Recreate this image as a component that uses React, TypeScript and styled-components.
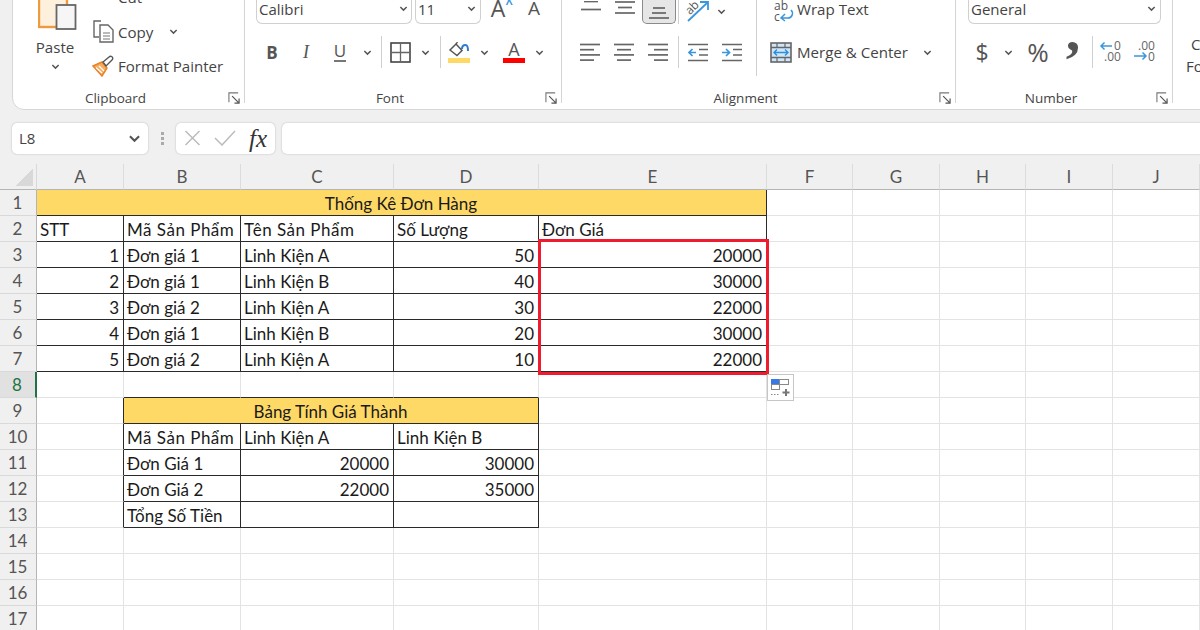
import React from "react";
import styled, { createGlobalStyle, css } from "styled-components";

const GlobalStyle = createGlobalStyle`
    html, body {
        margin: 0;
        padding: 0;
        background: #f0f0f0;
    }
    * {
        box-sizing: border-box;
    }
`;

const COLS = [87, 117, 153, 145, 228, 86, 87, 86, 87, 87];
const COL_NAMES = ["A", "B", "C", "D", "E", "F", "G", "H", "I", "J"];
const ROW_COUNT = 17;

// nội dung bảng, key = tên ô
const DATA: Record<string, string | number> = {
    A1: "Thống Kê Đơn Hàng",
    A2: "STT",
    B2: "Mã Sản Phẩm",
    C2: "Tên Sản Phẩm",
    D2: "Số Lượng",
    E2: "Đơn Giá",
    A3: 1,
    B3: "Đơn giá 1",
    C3: "Linh Kiện A",
    D3: 50,
    E3: 20000,
    A4: 2,
    B4: "Đơn giá 1",
    C4: "Linh Kiện B",
    D4: 40,
    E4: 30000,
    A5: 3,
    B5: "Đơn giá 2",
    C5: "Linh Kiện A",
    D5: 30,
    E5: 22000,
    A6: 4,
    B6: "Đơn giá 1",
    C6: "Linh Kiện B",
    D6: 20,
    E6: 30000,
    A7: 5,
    B7: "Đơn giá 2",
    C7: "Linh Kiện A",
    D7: 10,
    E7: 22000,
    B9: "Bảng Tính Giá Thành",
    B10: "Mã Sản Phẩm",
    C10: "Linh Kiện A",
    D10: "Linh Kiện B",
    B11: "Đơn Giá 1",
    C11: 20000,
    D11: 30000,
    B12: "Đơn Giá 2",
    C12: 22000,
    D12: 35000,
    B13: "Tổng Số Tiền",
};

const Chevron = ({ size = 9 }: { size?: number }) => (
    <svg width={size} height={size} viewBox="0 0 10 10" fill="none">
        <path d="M1.5 3.2 5 6.8l3.5-3.6" stroke="#555" strokeWidth="1.6" />
    </svg>
);

const Launcher = () => (
    <svg width="12" height="12" viewBox="0 0 13 13" fill="none">
        <path d="M11 1H1v10" stroke="#777" strokeWidth="1.2" />
        <path d="M4.5 4.5 12 12M12 7v5H7" stroke="#555" strokeWidth="1.3" />
    </svg>
);

const PasteIcon = () => (
    <svg width="40" height="44" viewBox="0 0 40 44" fill="none">
        <rect x="1" y="1" width="28" height="38" fill="#fdf0dc" stroke="#ee9a3e" strokeWidth="2.4" />
        <rect x="18.5" y="17" width="19" height="24" fill="#f6f6f6" stroke="#666" strokeWidth="1.8" />
    </svg>
);

const CutIcon = () => (
    <svg width="16" height="16" viewBox="0 0 16 16" fill="none">
        <circle cx="3.5" cy="8" r="2.3" stroke="#3a96dd" strokeWidth="1.6" />
        <circle cx="12.5" cy="8" r="2.3" stroke="#3a96dd" strokeWidth="1.6" />
        <path d="M4.5 5.5 8 -3M11.5 5.5 8 -3" stroke="#555" strokeWidth="1.2" />
    </svg>
);

const CopyIcon = () => (
    <svg width="23" height="23" viewBox="0 0 23 23" fill="none">
        <path d="M9 1H2v16h5" stroke="#666" strokeWidth="1.4" />
        <path d="M8 5h8l5 5v12H8z" fill="#fff" stroke="#666" strokeWidth="1.4" />
        <path d="M11 13h7M11 16h7M11 19h7" stroke="#777" strokeWidth="1.1" />
    </svg>
);

const PainterIcon = () => (
    <svg width="23" height="22" viewBox="0 0 23 22" fill="none">
        <path d="M1 11 10 7l5 6-5 8z" fill="#f5ad5f" stroke="#e8822a" strokeWidth="1.5" />
        <path d="M4 12.5 10 18M7 11l5 5" stroke="#fff" strokeWidth="1.2" />
        <path d="m11 7 3 4 6-6c1-1 1-2.500 0-3.200S18 1 17 2z" fill="#fff" stroke="#555" strokeWidth="1.4" />
    </svg>
);

const BordersIcon = () => (
    <svg width="21" height="21" viewBox="0 0 21 21" fill="none">
        <rect x="1" y="1" width="19" height="19" stroke="#444" strokeWidth="1.6" />
        <path d="M10.500 1v19M1 10.500h19" stroke="#666" strokeWidth="1.300" />
    </svg>
);

const FillIcon = () => (
    <svg width="23" height="21" viewBox="0 0 23 21" fill="none">
        <path d="M2 8 8 2l6 6.500-5 5z" stroke="#555" strokeWidth="1.500" />
        <path d="M8 2 9.500 0" stroke="#555" strokeWidth="1.300" />
        <path d="M14 7c0-3 2-4 3.500-4s2.500 2 2.500 6" stroke="#2b7cd3" strokeWidth="2" />
        <rect y="16" width="22" height="5" fill="#ffd966" />
    </svg>
);

const AlignIcon = ({ lines }: { lines: [number, number][] }) => (
    <svg width="20" height="19" viewBox="0 0 20 19" fill="none">
        {lines.map(([x1, x2], i) => (
            <path key={i} d={`M${x1} ${1.5 + i * 5.2}H${x2}`} stroke="#666" strokeWidth="1.700" />
        ))}
    </svg>
);

const TopAlignIcon = ({ lines }: { lines: [number, number, number][] }) => (
    <svg width="20" height="20" viewBox="0 0 20 20" fill="none">
        {lines.map(([x1, x2, y], i) => (
            <path key={i} d={`M${x1} ${y}H${x2}`} stroke="#666" strokeWidth="1.700" />
        ))}
    </svg>
);

const OrientationIcon = () => (
    <svg width="26" height="24" viewBox="0 0 26 24" fill="none">
        <text x="2" y="13" transform="rotate(-45 8 10)" fontFamily="Open Sans" fontSize="12" fill="#555">
            ab
        </text>
        <path d="M4 22 23 4M16 3h8v8" stroke="#3a96dd" strokeWidth="1.800" />
    </svg>
);

const WrapIcon = () => (
    <svg width="22" height="22" viewBox="0 0 22 22" fill="none">
        <text x="1" y="10" fontFamily="Open Sans" fontSize="12" fill="#555">
            ab
        </text>
        <text x="1" y="21" fontFamily="Open Sans" fontSize="12" fill="#555">
            c
        </text>
        <path d="M18 10c3 3 1 8-3 8H9M12 14l-4 4 4 3" stroke="#3a96dd" strokeWidth="1.500" />
    </svg>
);

const IndentIcon = ({ dir }: { dir: "left" | "right" }) => (
    <svg width="20" height="19" viewBox="0 0 20 19" fill="none">
        <path d="M0 1.500h20M0 17.500h20" stroke="#666" strokeWidth="1.600" />
        <path d="M11 6.500h9M11 12h9" stroke="#666" strokeWidth="1.600" />
        {dir === "left" ? (
            <path d="M8 9.500H1M4.500 6 1 9.500 4.500 13" stroke="#3a96dd" strokeWidth="1.700" />
        ) : (
            <path d="M0 9.500h7M4 6l3.500 3.500L4 13" stroke="#3a96dd" strokeWidth="1.700" />
        )}
    </svg>
);

const MergeIcon = () => (
    <svg width="22" height="21" viewBox="0 0 22 21" fill="none">
        <rect x="1" y="1" width="20" height="19" fill="#cfe6f8" stroke="#666" strokeWidth="1.600" />
        <path d="M1 5.500h20M1 15.500h20" stroke="#666" strokeWidth="1.300" />
        <path d="M7 1v4M15 1v4M7 16v4M15 16v4" stroke="#666" strokeWidth="1.200" />
        <path d="M4 10.500h14M7 7.500l-3 3 3 3M15 7.500l3 3-3 3" stroke="#2b8fdc" strokeWidth="1.400" />
    </svg>
);

const DecimalIcon = ({ more }: { more: boolean }) => (
    <svg width="24" height="24" viewBox="0 0 24 24" fill="none">
        <text x={more ? 15 : 5} y="10" fontFamily="Open Sans" fontSize="12" fill="#666">
            {more ? "0" : ".00"}
        </text>
        <text x={more ? 5 : 15} y="21" fontFamily="Open Sans" fontSize="12" fill="#666">
            {more ? ".00" : "0"}
        </text>
        {more ? (
            <path d="M13 6H2M5.500 2.500 2 6l3.500 3.500" stroke="#3a96dd" strokeWidth="1.500" />
        ) : (
            <path d="M1 16h12M9.500 12.500 13 16l-3.500 3.500" stroke="#3a96dd" strokeWidth="1.500" />
        )}
    </svg>
);

const PasteOptionsIcon = () => (
    <svg width="20" height="18" viewBox="0 0 20 18" fill="none">
        <rect x="0.500" y="0.500" width="8" height="5" fill="#3b78e7" stroke="#3b78e7" />
        <rect x="8.500" y="0.500" width="9" height="5" fill="#fff" stroke="#888" />
        <rect x="0.500" y="5.500" width="8" height="5" fill="#fff" stroke="#888" />
        <path d="M0 15.500h9" stroke="#888" strokeDasharray="1.500 1.500" />
        <path d="M15 10v7M11.500 13.500h7" stroke="#777" strokeWidth="2" />
    </svg>
);

export default function App() {
    const cells: React.ReactNode[] = [];

    for (let r = 1; r <= ROW_COUNT; r++) {
        cells.push(
            <RowHead key={`head-${r}`} $active={r === 8}>
                {r}
            </RowHead>
        );
        for (let c = 0; c < COL_NAMES.length + 1; c++) {
            // ô gộp
            if (r === 1 && c > 0 && c < 5) continue;
            if (r === 9 && c > 1 && c < 4) continue;

            const name = `${COL_NAMES[c]}${r}`;
            const value = DATA[name];
            const merged = (r === 1 && c === 0) || (r === 9 && c === 1);
            const upper = r <= 7 && c <= 4;
            const lower = r >= 9 && r <= 13 && c >= 1 && c <= 3;
            const wide = typeof value === "string" && value.includes("Phẩm");

            cells.push(
                <Cell
                    key={name}
                    $span={merged ? (r === 1 ? 5 : 3) : 1}
                    $merged={merged}
                    $number={typeof value === "number"}
                    $wide={wide}
                    $darkRight={upper || lower || (r >= 9 && r <= 13 && c === 0)}
                    $darkBottom={upper || lower || (r === 8 && c >= 1 && c <= 3)}
                >
                    {value}
                </Cell>
            );
        }
    }

    return (
        <Page>
            <GlobalStyle />
            <Ribbon>
                <Group $width={232}>
                    <GroupBody>
                        <ClipboardWrap>
                            <PasteCol>
                                <PasteIconWrap>
                                    <PasteIcon />
                                </PasteIconWrap>
                                <RibbonText>Paste</RibbonText>
                                <Chevron />
                            </PasteCol>
                            <ClipList>
                                <ClipItem>
                                    <ClipIcon>
                                        <CutIcon />
                                    </ClipIcon>
                                    <RibbonText>Cut</RibbonText>
                                </ClipItem>
                                <ClipItem>
                                    <ClipIcon>
                                        <CopyIcon />
                                    </ClipIcon>
                                    <RibbonText>Copy</RibbonText>
                                    <ChevronGap $left={16}>
                                        <Chevron />
                                    </ChevronGap>
                                </ClipItem>
                                <ClipItem>
                                    <ClipIcon>
                                        <PainterIcon />
                                    </ClipIcon>
                                    <RibbonText>Format Painter</RibbonText>
                                </ClipItem>
                            </ClipList>
                        </ClipboardWrap>
                    </GroupBody>
                    <GroupFooter>
                        <span />
                        <GroupLabel>Clipboard</GroupLabel>
                        <LauncherSlot>
                            <Launcher />
                        </LauncherSlot>
                    </GroupFooter>
                </Group>

                <Group $width={317}>
                    <GroupBody>
                        <ToolRow $left={11}>
                            <Select $width={156} $padRight={3}>
                                <SelectText>Calibri</SelectText>
                                <Chevron />
                            </Select>
                            <Select $width={66} $gap={3} $padRight={4}>
                                <SelectText>11</SelectText>
                                <Chevron />
                            </Select>
                            <Tool $width={36} $left={-1}>
                                <RaisedGlyph $size={23}>A</RaisedGlyph>
                                <SuperMark $color="#3a96dd">^</SuperMark>
                            </Tool>
                            <Tool $width={36}>
                                <RaisedGlyph $size={19}>A</RaisedGlyph>
                                <SuperMark $color="#3a96dd">ˇ</SuperMark>
                            </Tool>
                        </ToolRow>
                        <ToolRow $left={10} $top>
                            <Tool $width={34}>
                                <Glyph $size={17} $weight={700}>
                                    B
                                </Glyph>
                            </Tool>
                            <Tool $width={34}>
                                <Glyph $size={18} $italic>
                                    I
                                </Glyph>
                            </Tool>
                            <Tool $width={34}>
                                <Underlined>U</Underlined>
                            </Tool>
                            <Tool $width={20}>
                                <Chevron />
                            </Tool>
                            <Divider />
                            <Tool $width={28}>
                                <BordersIcon />
                            </Tool>
                            <Tool $width={14} $left={4}>
                                <Chevron />
                            </Tool>
                            <Divider $left={8} />
                            <Tool $width={28}>
                                <FillIcon />
                            </Tool>
                            <Tool $width={14} $left={4}>
                                <Chevron />
                            </Tool>
                            <Tool $width={46}>
                                <ColorA>A</ColorA>
                            </Tool>
                            <Tool $width={14} $left={-5}>
                                <Chevron />
                            </Tool>
                        </ToolRow>
                    </GroupBody>
                    <GroupFooter>
                        <span />
                        <GroupLabel>Font</GroupLabel>
                        <LauncherSlot>
                            <Launcher />
                        </LauncherSlot>
                    </GroupFooter>
                </Group>

                <Group $width={394}>
                    <GroupBody>
                        <ToolRow $left={12}>
                            <Tool $width={34}>
                                <TopAlignIcon lines={[[3, 17, 0.5], [0, 20, 8.5]]} />
                            </Tool>
                            <Tool $width={34}>
                                <TopAlignIcon lines={[[0, 20, 1], [3, 17, 6.5], [0, 20, 12]]} />
                            </Tool>
                            <Tool $width={34} $selected>
                                <TopAlignIcon lines={[[4, 16, 7], [3, 17, 12], [0, 20, 17]]} />
                            </Tool>
                            <Divider $h={26} $left={2} />
                            <Tool $width={28}>
                                <OrientationIcon />
                            </Tool>
                            <Tool $width={14} $left={3}>
                                <Chevron />
                            </Tool>
                            <Divider $h={38} $left={28} />
                            <Tool $width={27} $left={9}>
                                <WrapIcon />
                            </Tool>
                            <RaisedText>Wrap Text</RaisedText>
                        </ToolRow>
                        <ToolRow $left={11} $top>
                            <Tool $width={34}>
                                <AlignIcon lines={[[0, 20], [0, 14], [0, 20], [0, 14]]} />
                            </Tool>
                            <Tool $width={34}>
                                <AlignIcon lines={[[0, 20], [3, 17], [0, 20], [3, 17]]} />
                            </Tool>
                            <Tool $width={34}>
                                <AlignIcon lines={[[0, 20], [6, 20], [0, 20], [6, 20]]} />
                            </Tool>
                            <Divider $left={3} />
                            <Tool $width={30}>
                                <IndentIcon dir="left" />
                            </Tool>
                            <Tool $width={38}>
                                <IndentIcon dir="right" />
                            </Tool>
                            <Divider $h={48} $left={5} />
                            <Tool $width={33} $left={3}>
                                <MergeIcon />
                            </Tool>
                            <RibbonText>Merge &amp; Center</RibbonText>
                            <ChevronGap $left={15}>
                                <Chevron />
                            </ChevronGap>
                        </ToolRow>
                    </GroupBody>
                    <GroupFooter>
                        <span />
                        <GroupLabel>Alignment</GroupLabel>
                        <LauncherSlot>
                            <Launcher />
                        </LauncherSlot>
                    </GroupFooter>
                </Group>

                <Group $width={217}>
                    <GroupBody>
                        <ToolRow $left={12}>
                            <Select $width={193} $padRight={4}>
                                <SelectText>General</SelectText>
                                <Chevron />
                            </Select>
                        </ToolRow>
                        <ToolRow $left={10} $top>
                            <Tool $width={32}>
                                <Glyph $size={23}>$</Glyph>
                            </Tool>
                            <Tool $width={20}>
                                <Chevron />
                            </Tool>
                            <Tool $width={40}>
                                <Glyph $size={26}>%</Glyph>
                            </Tool>
                            <Tool $width={30}>
                                <CommaGlyph>,</CommaGlyph>
                            </Tool>
                            <Divider />
                            <Tool $width={28}>
                                <DecimalIcon more />
                            </Tool>
                            <Tool $width={40}>
                                <DecimalIcon more={false} />
                            </Tool>
                        </ToolRow>
                    </GroupBody>
                    <GroupFooter>
                        <span />
                        <GroupLabel>Number</GroupLabel>
                        <LauncherSlot>
                            <Launcher />
                        </LauncherSlot>
                    </GroupFooter>
                </Group>

                <CutGroup>
                    <CutLine $left={18}>Conditional</CutLine>
                    <CutLine $left={13}>Formatting</CutLine>
                </CutGroup>
            </Ribbon>

            <FormulaBar>
                <NameBox>
                    <NameText>L8</NameText>
                    <Chevron size={13} />
                </NameBox>
                <Dots>
                    <i />
                    <i />
                    <i />
                </Dots>
                <FxBox>
                    <svg width="17" height="16" viewBox="0 0 16 16" fill="none">
                        <path d="M1 1l14 14M15 1 1 15" stroke="#bbb" strokeWidth="1.500" />
                    </svg>
                    <svg width="22" height="16" viewBox="0 0 22 16" fill="none">
                        <path d="M1 8l7 7L21 1" stroke="#bbb" strokeWidth="1.500" />
                    </svg>
                    <FxText>fx</FxText>
                </FxBox>
                <FormulaInput />
            </FormulaBar>

            <Sheet>
                <Corner />
                {COL_NAMES.map((n) => (
                    <ColHead key={n}>{n}</ColHead>
                ))}
                <ColHead />
                {cells}
                <RedBox />
                <PasteOptions>
                    <PasteOptionsIcon />
                </PasteOptions>
            </Sheet>
        </Page>
    );
}

const Page = styled.div`
    width: 1200px;
    height: 630px;
    overflow: hidden;
    background: #f0f0f0;
    display: flex;
    flex-direction: column;
`;

const Ribbon = styled.div`
    flex: none;
    display: flex;
    margin: -22px 0 0 12px;
    width: 1300px;
    height: 132px;
    padding-bottom: 6px;
    background: #fff;
    border: 1px solid #d6d6d6;
    border-radius: 0 0 0 12px;
`;

const Group = styled.div<{ $width: number }>`
    flex: none;
    display: flex;
    flex-direction: column;
    width: ${(p) => p.$width}px;
    border-right: 1px solid #d4d4d4;
`;

const GroupBody = styled.div`
    flex: none;
    height: 102px;
    padding-top: 19px;
`;

const GroupFooter = styled.div`
    display: grid;
    grid-template-columns: 1fr auto 1fr;
    align-items: center;
    height: 22px;
    padding: 8px 4px 0 0;
`;

const GroupLabel = styled.span`
    margin-right: 22px;
    font-family: "Open Sans", sans-serif;
    font-size: 13.5px;
    color: #444;
`;

const LauncherSlot = styled.span`
    justify-self: end;
    display: flex;
`;

const ClipboardWrap = styled.div`
    display: flex;
    padding-left: 12px;
`;

const PasteCol = styled.div`
    width: 60px;
    display: flex;
    flex-direction: column;
    align-items: center;
    margin-top: -19px;
    gap: 5px;
`;

const PasteIconWrap = styled.div`
    height: 53px;
    display: flex;
    align-items: flex-end;
    padding-left: 5px;
`;

const ClipList = styled.div`
    margin-top: -18px;
    margin-left: 3px;
    display: flex;
    flex-direction: column;
`;

const ClipItem = styled.div`
    height: 34.5px;
    display: flex;
    align-items: center;
`;

const ClipIcon = styled.span`
    width: 30px;
    display: flex;
    justify-content: center;
`;

const RibbonText = styled.span`
    font-family: "Open Sans", sans-serif;
    font-size: 15.1px;
    color: #444;
    white-space: nowrap;
`;

const RaisedText = styled(RibbonText)`
    margin-top: -4px;
`;

const ChevronGap = styled.span<{ $left: number }>`
    display: flex;
    margin-left: ${(p) => p.$left}px;
`;

const ToolRow = styled.div<{ $left: number; $top?: boolean }>`
    display: flex;
    align-items: center;
    height: ${(p) => (p.$top ? 32 : 26)}px;
    padding-left: ${(p) => p.$left}px;
    margin-top: ${(p) => (p.$top ? 12 : 0)}px;
`;

const Select = styled.div<{ $width: number; $gap?: number; $padRight: number }>`
    display: flex;
    align-items: center;
    justify-content: space-between;
    flex: none;
    width: ${(p) => p.$width}px;
    height: 26px;
    margin-left: ${(p) => p.$gap ?? 0}px;
    padding: 0 ${(p) => p.$padRight}px 4px 2px;
    border: 1px solid #d0d0d0;
    border-top: none;
    border-radius: 0 0 6px 6px;
`;

const SelectText = styled.span`
    font-family: "Open Sans", sans-serif;
    font-size: 15px;
    color: #444;
`;

const Tool = styled.div<{ $width: number; $left?: number; $selected?: boolean }>`
    position: relative;
    flex: none;
    display: flex;
    align-items: center;
    justify-content: center;
    width: ${(p) => p.$width}px;
    height: 100%;
    margin-left: ${(p) => p.$left ?? 0}px;
    ${(p) =>
        p.$selected &&
        css`
            background: #e6e6e6;
            border: 1px solid #8a8a8a;
            border-top: none;
            border-radius: 0 0 5px 5px;
        `}
`;

const Glyph = styled.span<{ $size: number; $weight?: number; $italic?: boolean }>`
    font-family: ${(p) => (p.$italic ? '"Liberation Serif", serif' : '"Open Sans", sans-serif')};
    font-size: ${(p) => p.$size}px;
    font-weight: ${(p) => p.$weight ?? 400};
    font-style: ${(p) => (p.$italic ? "italic" : "normal")};
    color: #555;
    line-height: 1;
`;

const RaisedGlyph = styled(Glyph)`
    margin-bottom: 6px;
`;

const SuperMark = styled.span<{ $color: string }>`
    position: absolute;
    top: -4px;
    right: 3px;
    font-family: "Open Sans", sans-serif;
    font-size: 13px;
    font-weight: 700;
    color: ${(p) => p.$color};
`;

const Underlined = styled.span`
    font-family: "Open Sans", sans-serif;
    font-size: 17px;
    color: #555;
    line-height: 1;
    padding-bottom: 1px;
    border-bottom: 2px solid #777;
`;

const ColorA = styled.span`
    font-family: "Open Sans", sans-serif;
    font-size: 18px;
    color: #555;
    line-height: 17px;
    width: 22px;
    text-align: center;
    border-bottom: 5px solid #ff0000;
`;

const CommaGlyph = styled.span`
    font-family: "Liberation Serif", serif;
    font-weight: 700;
    font-size: 58px;
    color: #555;
    line-height: 1;
    transform: translateY(-21px);
`;

const Divider = styled.div<{ $h?: number; $left?: number }>`
    flex: none;
    width: 1px;
    height: ${(p) => p.$h ?? 32}px;
    margin-left: ${(p) => p.$left ?? 4}px;
    margin-right: 4px;
    background: #d0d0d0;
`;

const CutGroup = styled.div`
    display: flex;
    flex-direction: column;
    gap: 2px;
    padding-top: 55px;
`;

const CutLine = styled(RibbonText)<{ $left: number }>`
    margin-left: ${(p) => p.$left}px;
`;

const FormulaBar = styled.div`
    flex: none;
    display: flex;
    align-items: center;
    height: 32px;
    margin-top: 12px;
    padding-left: 12px;
`;

const barBox = css`
    height: 31px;
    background: #fff;
    border-radius: 5px;
    box-shadow: 0 0 2px rgba(0, 0, 0, 0.25);
`;

const NameBox = styled.div`
    ${barBox}
    flex: none;
    display: flex;
    align-items: center;
    justify-content: space-between;
    width: 136px;
    padding: 0 7px;
`;

const NameText = styled.span`
    font-family: "Open Sans", sans-serif;
    font-size: 15px;
    color: #444;
`;

const Dots = styled.div`
    flex: none;
    width: 28px;
    display: flex;
    flex-direction: column;
    align-items: center;
    gap: 2px;
    & i {
        width: 3px;
        height: 3px;
        background: #aaa;
    }
`;

const FxBox = styled.div`
    ${barBox}
    flex: none;
    display: flex;
    align-items: center;
    gap: 13px;
    width: 99px;
    padding-left: 8px;
`;

const FxText = styled.span`
    font-family: "Liberation Serif", serif;
    font-style: italic;
    font-weight: 400;
    font-size: 25px;
    color: #333;
    line-height: 1;
`;

const FormulaInput = styled.div`
    ${barBox}
    flex: none;
    width: 950px;
    margin-left: 7px;
`;

const Sheet = styled.div`
    position: relative;
    flex: none;
    margin-top: 10px;
    display: grid;
    grid-template-columns: 37px ${COLS.map((w) => `${w}px`).join(" ")} 1fr;
    grid-auto-rows: 26px;
    background: #fff;
`;

const Corner = styled.div`
    background: #f0f0f0;
    border-right: 1px solid #d9d9d9;
    border-bottom: 1px solid #b5b5b5;
    &::after {
        content: "";
        display: block;
        width: 18px;
        height: 18px;
        margin: 4px 0 0 15px;
        background: linear-gradient(to bottom right, transparent 50%, #d8d8d8 50%);
    }
`;

const ColHead = styled.div`
    display: flex;
    align-items: center;
    justify-content: center;
    background: #f0f0f0;
    border-right: 1px solid #dcdcdc;
    border-bottom: 1px solid #b5b5b5;
    font-family: "Lato", sans-serif;
    font-size: 17px;
    color: #555;
`;

const RowHead = styled.div<{ $active: boolean }>`
    display: flex;
    align-items: center;
    justify-content: center;
    padding-right: 1px;
    background: ${(p) => (p.$active ? "#e1e1e1" : "#f0f0f0")};
    border-right: ${(p) => (p.$active ? "2px solid #217346" : "1px solid #b5b5b5")};
    border-bottom: 1px solid #d9d9d9;
    font-family: "Lato", sans-serif;
    font-size: 17px;
    color: ${(p) => (p.$active ? "#217346" : "#555")};
`;

const Cell = styled.div<{
    $span: number;
    $merged: boolean;
    $number: boolean;
    $wide: boolean;
    $darkRight: boolean;
    $darkBottom: boolean;
}>`
    grid-column: span ${(p) => p.$span};
    display: flex;
    align-items: center;
    justify-content: ${(p) => (p.$merged ? "center" : p.$number ? "flex-end" : "flex-start")};
    padding: 1px 4px 0 3px;
    overflow: hidden;
    white-space: nowrap;
    letter-spacing: ${(p) => (p.$wide ? "0.5px" : "0")};
    background: ${(p) => (p.$merged ? "#ffd966" : "#fff")};
    border-right: 1px solid ${(p) => (p.$darkRight ? "#2a2a2a" : "#e3e3e3")};
    border-bottom: 1px solid ${(p) => (p.$darkBottom ? "#2a2a2a" : "#e3e3e3")};
    font-family: "Lato", "Noto Sans", sans-serif;
    font-size: 17px;
    color: #1a1a1a;
`;

const RedBox = styled.div`
    position: absolute;
    left: 538px;
    top: 75px;
    width: 231px;
    height: 136px;
    border: 3.5px solid #ee1c2e;
    pointer-events: none;
`;

const PasteOptions = styled.div`
    position: absolute;
    left: 767px;
    top: 210px;
    width: 27px;
    height: 27px;
    display: flex;
    align-items: center;
    justify-content: center;
    background: #fff;
    border: 1px solid #c6c6c6;
`;
